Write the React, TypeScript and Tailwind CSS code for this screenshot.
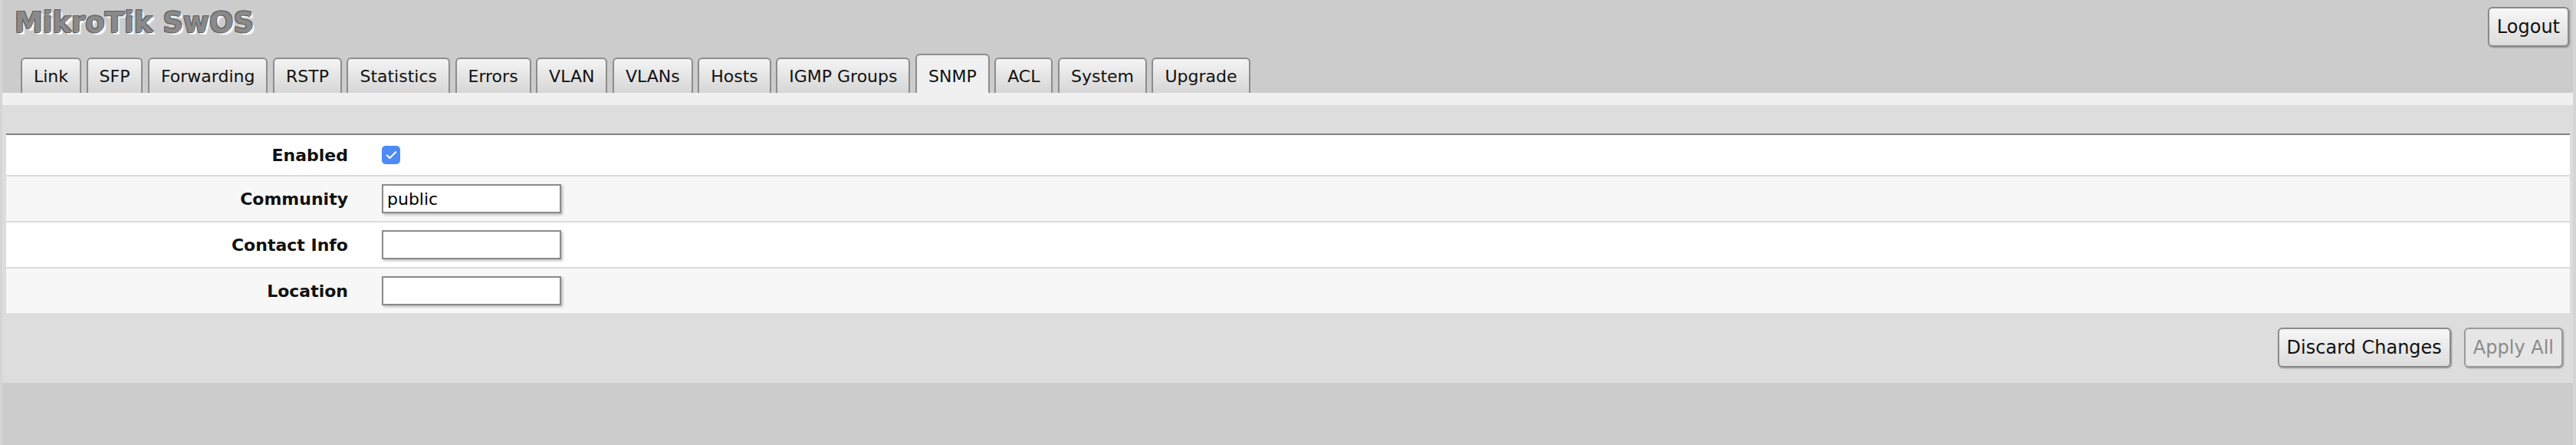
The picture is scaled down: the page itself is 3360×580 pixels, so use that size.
import { Check } from 'lucide-react'
import clsx from 'clsx'

const tabs = [
  'Link',
  'SFP',
  'Forwarding',
  'RSTP',
  'Statistics',
  'Errors',
  'VLAN',
  'VLANs',
  'Hosts',
  'IGMP Groups',
  'SNMP',
  'ACL',
  'System',
  'Upgrade',
]

const fields = [
  { label: 'Community', value: 'public' },
  { label: 'Contact Info', value: '' },
  { label: 'Location', value: '' },
]

const btn =
  'h-[52px] px-[10px] flex items-center border-2 rounded-[6px] text-[24px] shadow-[1px_1px_2px_rgba(0,0,0,0.35)]'

export default function App() {
  const active = 'SNMP'

  return (
    <div className="h-[580px] bg-[#cccccc] border-l-[3px] border-r-[4px] border-[#d5d5d5] font-['DejaVu_Sans',Verdana,sans-serif] text-[#111]">
      <div className="h-[70px] flex justify-between items-start">
        <div className="pt-[11px] pl-[16px] text-[37px] leading-[37px] font-bold text-[#8a8a8a] [text-shadow:-1px_-1px_0_#5c5c5c,1px_-1px_0_#5c5c5c,-1px_1px_0_#5c5c5c,2px_2px_0_#ffffff,3px_3px_1px_#f4f4f4]">
          MikroTik SwOS
        </div>
        <button className={clsx(btn, 'mt-[9px] mr-[5px] border-[#8a8a8a] bg-gradient-to-b from-[#f7f7f7] to-[#dcdcdc]')}>
          Logout
        </button>
      </div>

      <div className="flex items-end gap-[6.5px] pl-[24px] h-[51px]">
        {tabs.map((t) => (
          <div
            key={t}
            className={clsx(
              'px-[15px] flex items-center border-2 border-b-0 border-[#8c8c8c] rounded-t-[6px] text-[22px]',
              t === active
                ? 'h-[51px] pt-[5px] bg-[#f0f0f0]'
                : 'h-[46px] bg-gradient-to-b from-[#f4f4f4] to-[#d6d6d6]',
            )}
          >
            {t}
          </div>
        ))}
      </div>

      <div className="h-[16px] bg-[#f0f0f0]" />

      <div className="bg-[#dddddd] pt-[37px] pl-[5px] pr-[4px]">
        <div className="border-t-2 border-[#808080]">
          <div className="h-[54px] flex items-center bg-white border-b-2 border-[#dcdcdc]">
            <div className="w-[446px] text-right text-[22px] font-bold">Enabled</div>
            <div className="ml-[44px] w-[24px] h-[24px] rounded-[5px] bg-[#4c8bf5] flex items-center justify-center">
              <Check size={17} strokeWidth={3} color="#ffffff" />
            </div>
          </div>
          {fields.map((f, i) => (
            <div
              key={f.label}
              className={clsx(
                'h-[60px] flex items-center border-b-2',
                i % 2 === 0 ? 'bg-[#f7f7f7]' : 'bg-white',
                i === fields.length - 1 ? 'border-[#dddddd]' : 'border-[#dcdcdc]',
              )}
            >
              <div className="w-[446px] text-right text-[22px] font-bold">{f.label}</div>
              <input
                readOnly
                value={f.value}
                className="ml-[44px] w-[234px] h-[38px] px-[5px] bg-white border-2 border-[#8a8a8a] text-[22px] text-black shadow-[2px_2px_3px_rgba(0,0,0,0.25)] outline-none font-['DejaVu_Sans',Verdana,sans-serif]"
              />
            </div>
          ))}
        </div>

        <div className="flex justify-end gap-[17px] pt-[17px] pb-[20px] pr-[9px]">
          <button className={clsx(btn, 'border-[#8a8a8a] bg-gradient-to-b from-[#f7f7f7] to-[#dcdcdc]')}>
            Discard Changes
          </button>
          <button className={clsx(btn, 'border-[#9a9a9a] bg-[#e6e6e6] text-[#8a8a8a]')}>Apply All</button>
        </div>
      </div>
    </div>
  )
}
